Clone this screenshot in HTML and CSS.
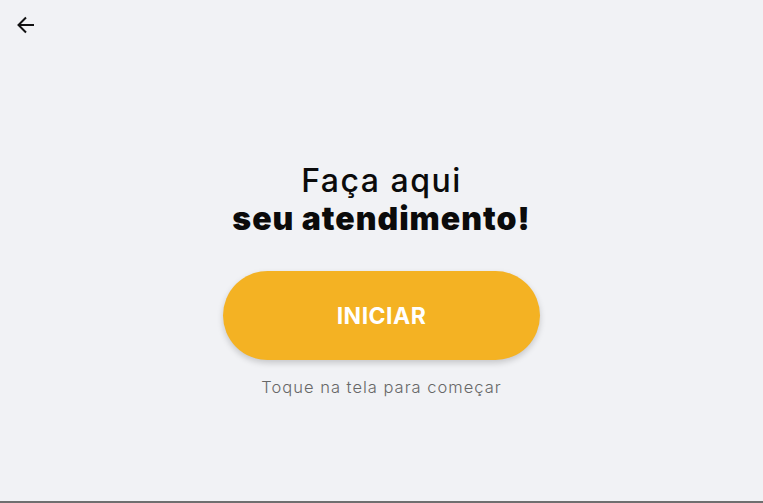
FILE: index.html
```html
<!DOCTYPE html>
<html lang="pt-BR">

<head>
    <meta charset="UTF-8">
    <meta name="viewport" content="width=device-width, initial-scale=1.0">
    <title>Atendimento</title>

    <link rel="stylesheet" href="styles.css">
</head>

<body>
    <div class="screen">
        <header class="topbar">
            <button class="back-btn" aria-label="Voltar">
                <svg width="18" height="18" viewBox="0 0 18 18" fill="none" stroke="#111" stroke-width="2">
                    <path d="M17 9H2" />
                    <path d="M9 1.5L1.5 9 9 16.5" />
                </svg>
            </button>
        </header>

        <main class="welcome">
            <h1 class="title">
                <span class="title-light">Faça aqui</span>
                <span class="title-bold">seu atendimento!</span>
            </h1>

            <button class="start-btn">INICIAR</button>

            <p class="hint">Toque na tela para começar</p>
        </main>
    </div>
</body>
</html>
```

FILE: styles.css
```css
* {
    margin: 0;
    padding: 0;
    box-sizing: border-box;
    font-family: Inter, "Noto Sans", sans-serif;
}

body {
    background-color: #f1f2f5;
    overflow: hidden;
}

.screen {
    height: 503px;
    border-bottom: 2px solid #6f6f6f;
    display: flex;
    flex-direction: column;
}

.topbar {
    padding: 16px 0 0 17px;
}

.back-btn {
    background: none;
    border: none;
    width: 18px;
    height: 18px;
    display: flex;
    cursor: pointer;
}

.welcome {
    display: flex;
    flex-direction: column;
    align-items: center;
    padding-top: 128px;
}

.title {
    display: flex;
    flex-direction: column;
    align-items: center;
    color: #0b0b0b;
    font-size: 32px;
    line-height: 38px;
}

.title-light {
    font-weight: 500;
    letter-spacing: 1.5px;
}

.title-bold {
    font-weight: 900;
    letter-spacing: 1px;
}

.start-btn {
    margin-top: 33px;
    width: 317px;
    height: 89px;
    border: none;
    border-radius: 45px;
    background-color: #f4b223;
    color: #ffffff;
    font-size: 23px;
    font-weight: 700;
    letter-spacing: 0.5px;
    box-shadow: 0px 3px 6px rgba(0, 0, 0, 0.18);
    cursor: pointer;
}

.hint {
    margin-top: 17px;
    color: #676767;
    font-size: 16.5px;
    font-weight: 300;
    letter-spacing: 1px;
}
```
